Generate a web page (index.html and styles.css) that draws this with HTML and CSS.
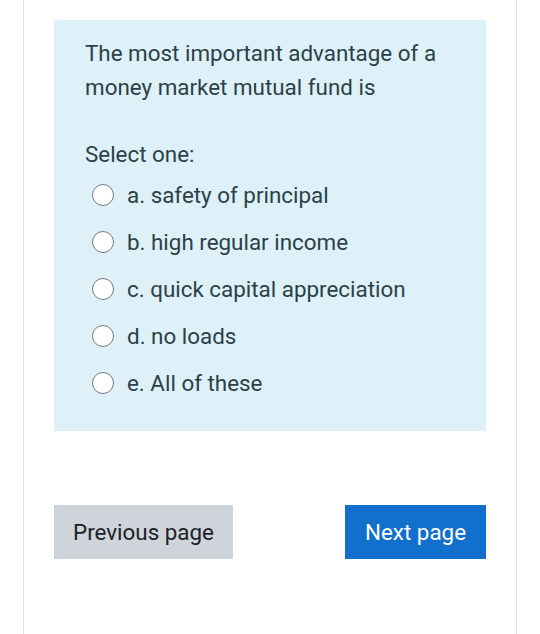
FILE: index.html
```html
<!DOCTYPE html>
<html>
<head>
<meta charset="utf-8">
<link rel="stylesheet" href="styles.css">
</head>
<body>
<div class="page">
  <div class="formulation">
    <div class="qtext">The most important advantage of a money market mutual fund is</div>
    <div class="prompt">Select one:</div>
    <div class="answers">
      <label class="opt"><span class="radio"></span><span class="lbl">a. safety of principal</span></label>
      <label class="opt"><span class="radio"></span><span class="lbl">b. high regular income</span></label>
      <label class="opt"><span class="radio"></span><span class="lbl">c. quick capital appreciation</span></label>
      <label class="opt"><span class="radio"></span><span class="lbl">d. no loads</span></label>
      <label class="opt"><span class="radio"></span><span class="lbl">e. All of these</span></label>
    </div>
  </div>
  <div class="nav">
    <button class="btn btn-prev">Previous page</button>
    <button class="btn btn-next">Next page</button>
  </div>
</div>
</body>
</html>
```
FILE: styles.css
```css
html, body {
  margin: 0;
  padding: 0;
  background: #ffffff;
  font-family: Roboto, "Liberation Sans", sans-serif;
}
.page {
  margin-left: 23px;
  width: 494px;
  min-height: 634px;
  border-left: 1px solid #dcdfe3;
  border-right: 1px solid #dcdfe3;
  padding: 20px 30px 0 30px;
  box-sizing: border-box;
}
.formulation {
  background: #def1f8;
  padding: 16px 31px 25px 31px;
  color: #2b4147;
  font-size: 22.4px;
}
.qtext {
  line-height: 34px;
}
.prompt {
  line-height: 34px;
  margin-top: 33px;
}
.answers {
  display: flex;
  flex-direction: column;
}
.opt {
  display: flex;
  align-items: center;
  height: 47px;
}
.radio {
  width: 22px;
  height: 22px;
  box-sizing: border-box;
  border: 1.6px solid #757a7f;
  border-radius: 50%;
  background: #ffffff;
  margin-left: 7px;
  margin-right: 13px;
  flex: none;
}
.nav {
  display: flex;
  justify-content: space-between;
  margin-top: 74px;
}
.btn {
  height: 54px;
  border: none;
  border-radius: 0;
  font-family: Roboto, "Liberation Sans", sans-serif;
  font-size: 22.4px;
  padding: 0;
}
.btn-prev {
  background: #ced4da;
  color: #1d2125;
  width: 179px;
}
.btn-next {
  background: #1170cc;
  color: #ffffff;
  width: 141px;
}
```
